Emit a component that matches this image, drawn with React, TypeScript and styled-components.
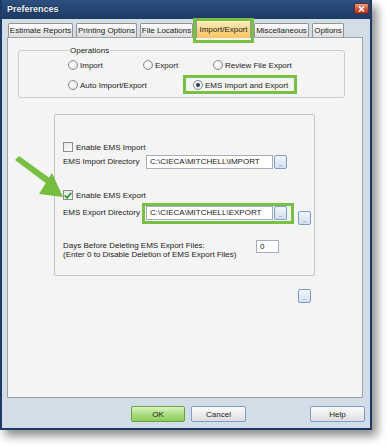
import React from "react"
import styled, { createGlobalStyle } from "styled-components"

const GlobalStyle = createGlobalStyle`
  html, body {
    margin: 0;
    padding: 0;
    background: #fff;
  }
  body {
    font-family: "Liberation Sans", Arial, sans-serif;
    font-size: 8px;
    color: #222;
  }
`

const tabs = [
  { label: "Estimate Reports", w: 65 },
  { label: "Printing Options", w: 61 },
  { label: "File Locations", w: 53 },
  { label: "Import/Export", w: 55, active: true },
  { label: "Miscellaneous", w: 55 },
  { label: "Options", w: 32 },
]

const Dots = () => <DotsText>...</DotsText>

const App: React.FC = () => {
  return (
    <Page>
      <GlobalStyle />
      <Window>
        <TitleBar>
          <Title>Preferences</Title>
          <CloseButton>
            <svg width="7" height="6" viewBox="0 0 7 6">
              <path d="M1 0.5 L6 5.5 M6 0.5 L1 5.5" stroke="#fff" strokeWidth="1.6" />
            </svg>
          </CloseButton>
        </TitleBar>
        <Body>
          <TabBar>
            {tabs.map((t) => (
              <Tab key={t.label} $w={t.w} $active={t.active}>
                {t.label}
                {t.active && <Ring $t={-2} $r={-4} $b={-5} $l={-4} />}
              </Tab>
            ))}
          </TabBar>
          <Panel>
            <GroupBox>
              <Legend>Operations</Legend>
              <RadioRow>
                <RadioItem $w={75}>
                  <RadioCircle />
                  Import
                </RadioItem>
                <RadioItem $w={70}>
                  <RadioCircle />
                  Export
                </RadioItem>
                <RadioItem>
                  <RadioCircle />
                  Review File Export
                </RadioItem>
              </RadioRow>
              <RadioRow>
                <RadioItem $w={125}>
                  <RadioCircle />
                  Auto Import/Export
                </RadioItem>
                <RadioItem>
                  <RadioCircle $on />
                  EMS Import and Export
                  <Ring $t={-5} $r={-9} $b={-4} $l={-10} />
                </RadioItem>
              </RadioRow>
            </GroupBox>

            <EmsBox>
              <CheckRow>
                <CheckBox />
                Enable EMS Import
              </CheckRow>
              <DirRow $mt={2}>
                <DirLabel>EMS Import Directory</DirLabel>
                <FieldGroup>
                  <PathInput>C:\CIECA\MITCHELL\IMPORT</PathInput>
                  <DotsButton>
                    <Dots />
                  </DotsButton>
                </FieldGroup>
              </DirRow>
              <CheckRow $mt={20}>
                <CheckBox>
                  <svg width="8" height="7" viewBox="0 0 8 7">
                    <path d="M0.8 3.4 L3 5.8 L7.3 0.8" stroke="#2f9a2c" strokeWidth="1.8" fill="none" />
                  </svg>
                </CheckBox>
                Enable EMS Export
              </CheckRow>
              <DirRow $mt={5}>
                <DirLabel>EMS Export Directory</DirLabel>
                <FieldGroup>
                  <PathInput>C:\CIECA\MITCHELL\EXPORT</PathInput>
                  <DotsButton>
                    <Dots />
                  </DotsButton>
                  <Ring $t={-3} $r={-7} $b={-4} $l={-4} />
                </FieldGroup>
                <DotsButton $ml={11} $mt={5}>
                  <Dots />
                </DotsButton>
              </DirRow>
              <DaysRow>
                <DaysText>
                  Days Before Deleting EMS Export Files:
                  <br />
                  (Enter 0 to Disable Deletion of EMS Export Files)
                </DaysText>
                <SmallInput>0</SmallInput>
              </DaysRow>
            </EmsBox>

            <DotsButton $ml={280} $mt={13}>
              <Dots />
            </DotsButton>
          </Panel>
          <Footer>
            <DialogButton $primary $mr={6}>OK</DialogButton>
            <DialogButton $mr={64}>Cancel</DialogButton>
            <DialogButton>Help</DialogButton>
          </Footer>
        </Body>
      </Window>

      <Arrow width="60" height="56" viewBox="0 0 60 56">
        <path d="M5 8 L9 4 L41 27 L37 32 Z" fill="#78c043" />
        <path d="M42 21 L29 42 L53 45 Z" fill="#74bd3e" />
      </Arrow>
    </Page>
  )
}

export default App

const Page = styled.div`
  position: relative;
  width: 388px;
  height: 446px;
  background: #fff;
  overflow: hidden;
`
const Window = styled.div`
  box-sizing: border-box;
  width: 372px;
  height: 430px;
  display: flex;
  flex-direction: column;
  background: #d2dde8;
  border: 2px solid #1d3a64;
  border-top: 0;
  box-shadow: 5px 6px 9px rgba(0, 0, 0, 0.45);
`
const TitleBar = styled.div`
  flex: none;
  height: 19px;
  display: flex;
  align-items: flex-start;
  justify-content: space-between;
  padding: 0 1px 0 5px;
  background: linear-gradient(#2d5080, #1d3a64);
`
const Title = styled.span`
  margin-top: 4px;
  color: #eef3f9;
  font-weight: bold;
  font-size: 9px;
  text-shadow: 0 0 2px rgba(0, 0, 0, 0.6);
`
const CloseButton = styled.div`
  box-sizing: border-box;
  width: 15px;
  height: 11px;
  margin-top: 3px;
  display: flex;
  align-items: center;
  justify-content: center;
  border: 1px solid #6d2a20;
  border-radius: 2px;
  background: linear-gradient(#eba08b, #d2583f 50%, #b8321a);
`
const Body = styled.div`
  flex: 1;
  display: flex;
  flex-direction: column;
  padding: 0 7px 0 5px;
`
const TabBar = styled.div`
  position: relative;
  z-index: 1;
  height: 18px;
  display: flex;
  align-items: flex-end;
  gap: 3px;
  padding-left: 1px;
`
const Tab = styled.div<{ $w: number; $active?: boolean }>`
  position: relative;
  box-sizing: border-box;
  width: ${(p) => p.$w}px;
  height: ${(p) => (p.$active ? 19 : 14)}px;
  margin-bottom: ${(p) => (p.$active ? -1 : 0)}px;
  display: flex;
  align-items: center;
  justify-content: center;
  border: 1px solid #949494;
  border-bottom: 0;
  border-radius: 2px 2px 0 0;
  background: ${(p) =>
    p.$active
      ? "linear-gradient(#fff3d0, #fcda8e 45%, #f7c462)"
      : "linear-gradient(#ffffff, #eeeeee 50%, #dddddd)"};
  white-space: nowrap;
`
const Ring = styled.span<{ $t: number; $r: number; $b: number; $l: number }>`
  position: absolute;
  top: ${(p) => p.$t}px;
  right: ${(p) => p.$r}px;
  bottom: ${(p) => p.$b}px;
  left: ${(p) => p.$l}px;
  border: 3px solid #78c043;
  pointer-events: none;
  z-index: 2;
`
const Panel = styled.div`
  box-sizing: border-box;
  height: 361px;
  flex: none;
  display: flex;
  flex-direction: column;
  align-items: flex-start;
  padding: 8px 17px 0 10px;
  border: 1px solid #9ba3ad;
  background: #f4f4f4;
`
const GroupBox = styled.fieldset`
  box-sizing: border-box;
  width: 327px;
  margin: 0;
  min-width: 0;
  padding: 3px 0 5px 49px;
  display: flex;
  flex-direction: column;
  gap: 6px;
  border: 1px solid #cdcdcd;
  border-radius: 3px;
`
const Legend = styled.legend`
  margin-left: 1px;
  padding: 0 1px;
  font-size: 8px;
  line-height: 9px;
`
const RadioRow = styled.div`
  height: 14px;
  display: flex;
  align-items: center;
`
const RadioItem = styled.div<{ $w?: number }>`
  position: relative;
  display: flex;
  align-items: center;
  gap: 2px;
  width: ${(p) => (p.$w ? `${p.$w}px` : "auto")};
  white-space: nowrap;
`
const RadioCircle = styled.span<{ $on?: boolean }>`
  box-sizing: border-box;
  width: 10px;
  height: 10px;
  flex: none;
  display: flex;
  align-items: center;
  justify-content: center;
  border: 1px solid #8a8a8a;
  border-radius: 50%;
  background: radial-gradient(circle at 40% 40%, #ffffff, #dedede);

  &::after {
    content: "";
    width: 4px;
    height: 4px;
    border-radius: 50%;
    background: ${(p) => (p.$on ? "#1f3c6a" : "transparent")};
  }
`
const EmsBox = styled.div`
  box-sizing: border-box;
  width: 261px;
  height: 162px;
  margin: 16px 0 0 36px;
  padding: 26px 0 0 8px;
  display: flex;
  flex-direction: column;
  border: 1px solid #c4c4c4;
  border-radius: 2px;
`
const CheckRow = styled.div<{ $mt?: number }>`
  height: 12px;
  margin-top: ${(p) => p.$mt || 0}px;
  display: flex;
  align-items: center;
  gap: 3px;
`
const CheckBox = styled.span`
  box-sizing: border-box;
  width: 10px;
  height: 10px;
  display: flex;
  align-items: center;
  justify-content: center;
  border: 1px solid #8e8e8e;
  background: linear-gradient(135deg, #e4e4e4, #ffffff);
`
const DirRow = styled.div<{ $mt?: number }>`
  margin-top: ${(p) => p.$mt || 0}px;
  display: flex;
  align-items: flex-start;
`
const DirLabel = styled.div`
  width: 83px;
  line-height: 14px;
  white-space: nowrap;
`
const FieldGroup = styled.div`
  position: relative;
  display: flex;
  gap: 1px;
`
const PathInput = styled.div`
  box-sizing: border-box;
  width: 127px;
  height: 14px;
  padding-left: 3px;
  line-height: 12px;
  border: 1px solid #a5aeb9;
  background: #fff;
  white-space: nowrap;
`
const DotsButton = styled.div<{ $ml?: number; $mt?: number }>`
  box-sizing: border-box;
  flex: none;
  width: 13px;
  height: 14px;
  margin-left: ${(p) => p.$ml || 0}px;
  margin-top: ${(p) => p.$mt || 0}px;
  display: flex;
  align-items: center;
  justify-content: center;
  border: 1px solid #7d9dd0;
  border-radius: 2px;
  background: linear-gradient(#f4f7fc, #d3def0);
`
const DotsText = styled.span`
  margin-top: 3px;
  font-size: 6px;
  line-height: 6px;
  color: #6a6a6a;
  letter-spacing: -0.5px;
`
const DaysRow = styled.div`
  margin-top: 15px;
  display: flex;
  align-items: flex-start;
`
const DaysText = styled.div`
  width: 193px;
  padding-top: 1px;
  line-height: 9px;
  white-space: nowrap;
`
const SmallInput = styled.div`
  box-sizing: border-box;
  width: 23px;
  height: 13px;
  padding-left: 3px;
  line-height: 11px;
  border: 1px solid #a5aeb9;
  background: #fff;
`
const Footer = styled.div`
  flex: 1;
  display: flex;
  align-items: flex-start;
  justify-content: flex-end;
  padding-top: 8px;
  margin-right: -2px;
`
const DialogButton = styled.div<{ $primary?: boolean; $mr?: number }>`
  box-sizing: border-box;
  width: ${(p) => (p.$primary ? 54 : 55)}px;
  height: 16px;
  margin-right: ${(p) => p.$mr || 0}px;
  display: flex;
  align-items: center;
  justify-content: center;
  border: 1px solid ${(p) => (p.$primary ? "#63a23c" : "#7b9dd0")};
  border-radius: 2px;
  background: ${(p) =>
    p.$primary
      ? "linear-gradient(#dcf3c4, #acdd80 50%, #90cd5e)"
      : "linear-gradient(#fcfcfc, #ededed 50%, #dddddd)"};
`
const Arrow = styled.svg`
  position: absolute;
  left: 10px;
  top: 152px;
  pointer-events: none;
`
